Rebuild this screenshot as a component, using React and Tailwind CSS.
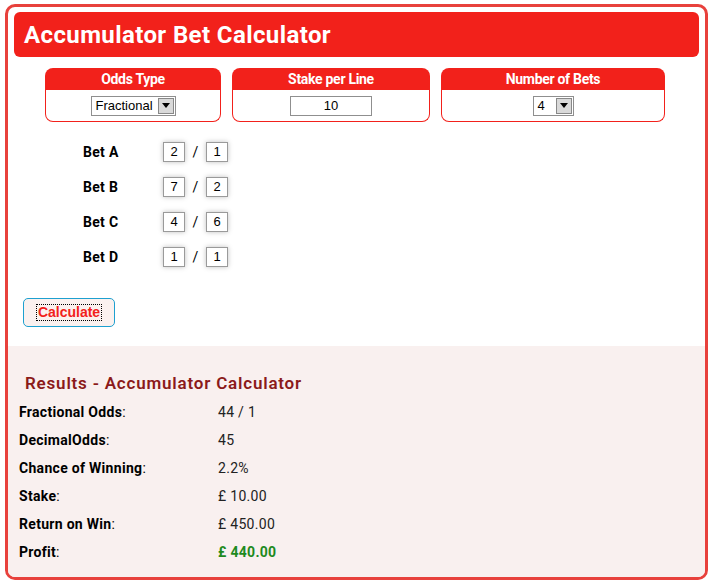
import React from "react";

const FONT = "font-['Roboto','Liberation_Sans',sans-serif]";

function Panel({ title, children }) {
  return (
    <div className="flex flex-col">
      <div className="h-[22px] bg-[#f2211b] rounded-t-[8px] flex items-center justify-center text-white font-bold text-[14px] tracking-[-0.3px]">
        {title}
      </div>
      <div className="h-[32px] border border-t-0 border-[#f2211b] rounded-b-[8px] bg-white flex items-center justify-center">
        {children}
      </div>
    </div>
  );
}

function Select({ value, width }) {
  return (
    <div
      className={`h-[20px] border border-[#8f8f8f] bg-white flex items-center ${width} font-['Liberation_Sans',sans-serif] text-[13px] text-black`}
    >
      <span className="flex-1 pl-[4px] leading-none">{value}</span>
      <span className="w-[16px] h-[16px] mr-[1px] bg-[#d9d9d9] border border-[#888] flex items-center justify-center">
        <svg width="8" height="5" viewBox="0 0 8 5">
          <path d="M0 0h8L4 5z" fill="#000" />
        </svg>
      </span>
    </div>
  );
}

function OddsBox({ v }) {
  return (
    <div className="w-[22px] h-[20px] border border-[#9a9a9a] bg-white shadow-[0_0_5px_rgba(0,0,0,0.25)] flex items-center justify-center font-['Liberation_Sans',sans-serif] text-[13px] text-black">
      {v}
    </div>
  );
}

const bets = [
  ["Bet A", "2", "1"],
  ["Bet B", "7", "2"],
  ["Bet C", "4", "6"],
  ["Bet D", "1", "1"],
];

const results = [
  ["Fractional Odds", "44 / 1"],
  ["DecimalOdds", "45"],
  ["Chance of Winning", "2.2%"],
  ["Stake", "£ 10.00"],
  ["Return on Win", "£ 450.00"],
  ["Profit", "£ 440.00", true],
];

export default function App() {
  return (
    <div className={`w-[713px] h-[584px] bg-white pt-[4px] pl-[5px] ${FONT}`}>
      <div className="w-[703px] h-[576px] border-[3px] border-[#e8413c] rounded-[10px] overflow-hidden flex flex-col">
        <div className="px-[6px] pt-[5px]">
          <div className="h-[45px] bg-[#f2211b] rounded-[6px] flex items-center pl-[10px] text-white font-bold text-[24px] tracking-[0.4px]">
            Accumulator Bet Calculator
          </div>
        </div>

        <div className="grid grid-cols-[176px_198px_224px] gap-[11px] pl-[37px] mt-[11px]">
          <Panel title="Odds Type">
            <Select value="Fractional" width="w-[85px]" />
          </Panel>
          <Panel title="Stake per Line">
            <div className="w-[82px] h-[20px] border border-[#8f8f8f] bg-white flex items-center justify-center font-['Liberation_Sans',sans-serif] text-[13px] text-black">
              10
            </div>
          </Panel>
          <Panel title="Number of Bets">
            <Select value="4" width="w-[41px]" />
          </Panel>
        </div>

        <div className="flex flex-col gap-[15px] pl-[75px] mt-[20px]">
          {bets.map(([label, a, b]) => (
            <div key={label} className="flex items-center h-[20px]">
              <span className="w-[80px] font-bold text-[14px] text-black tracking-[0.3px]">{label}</span>
              <OddsBox v={a} />
              <span className="w-[21px] text-center text-[14px] text-black">/</span>
              <OddsBox v={b} />
            </div>
          ))}
        </div>

        <div className="pl-[15px] mt-[31px]">
          <button className="w-[92px] h-[29px] rounded-[5px] border-[1.5px] border-[#1ea0d0] bg-[#fbf1ef] flex items-center justify-center">
            <span className="outline-1 outline-dotted outline-black px-[1px] font-['Liberation_Sans',sans-serif] font-bold text-[14px] text-[#f2211b] leading-[15px]">
              Calculate
            </span>
          </button>
        </div>

        <div className="flex-1 mt-[19px] bg-[#f9f0ef] pl-[11px] pt-[26px]">
          <div className="pl-[6px] text-[17px] font-semibold text-[#8b1a1a] leading-[22px] tracking-[0.8px]">
            Results - Accumulator Calculator
          </div>
          <div className="flex flex-col mt-[4px]">
            {results.map(([label, value, green]) => (
              <div key={label} className="flex items-center h-[28px] text-[14px] tracking-[0.3px]">
                <span className="w-[199px] text-black">
                  <span className="font-bold">{label}</span>:
                </span>
                <span className={green ? "font-bold text-[#1e8a1e]" : "text-[#222]"}>{value}</span>
              </div>
            ))}
          </div>
        </div>
      </div>
    </div>
  );
}
